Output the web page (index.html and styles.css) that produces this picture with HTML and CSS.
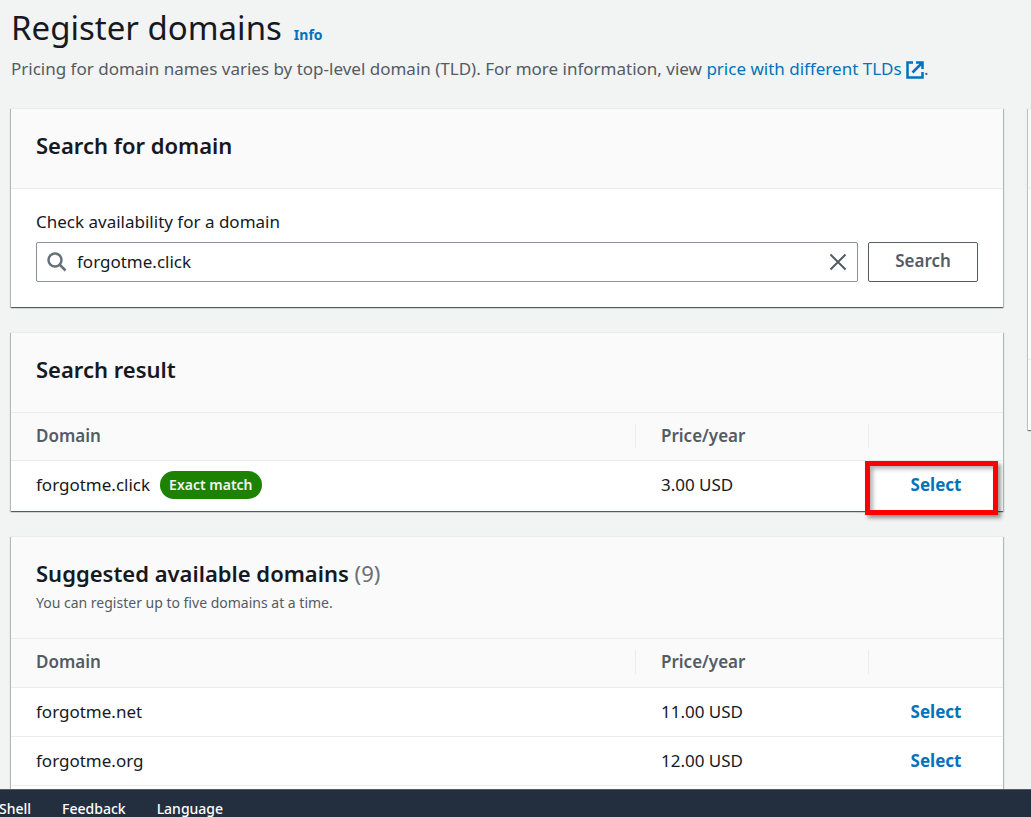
FILE: index.html
```html
<!DOCTYPE html>
<html lang="en">
<head>
<meta charset="utf-8">
<title>Register domains</title>
<link rel="stylesheet" href="styles.css">
</head>
<body>
<div class="page">
  <header class="page-header">
    <div class="title-row">
      <h1 class="title">Register domains</h1>
      <a class="info" href="#info">Info</a>
    </div>
    <p class="intro">Pricing for domain names varies by top-level domain (TLD). For more information, view <a class="link" href="#pricing">price with different TLDs <svg class="external" viewBox="0 0 18 18" aria-hidden="true"><path d="M7 1.500H1.500V16.500H16.500V11M10 1.500H16.500V8M16 2L6.500 11.500"/></svg></a>.</p>
  </header>
  <div class="layout">
    <main class="column">
      <section class="panel">
        <div class="panel-head"><h2 class="heading">Search for domain</h2></div>
        <form class="search-form">
          <label class="label" for="domain">Check availability for a domain</label>
          <div class="search-row">
            <div class="field">
              <svg class="glass" viewBox="0 0 20 20" aria-hidden="true"><circle cx="8" cy="8" r="6.500"/><path d="M12.500 12.500L18.500 18.500"/></svg>
              <input class="input" id="domain" type="text" value="forgotme.click">
              <button class="clear" type="button" aria-label="Clear"><svg class="cross" viewBox="0 0 18 18" aria-hidden="true"><path d="M1.500 1.500L16.500 16.500M16.500 1.500L1.500 16.500"/></svg></button>
            </div>
            <button class="search-button" type="button">Search</button>
          </div>
        </form>
      </section>

      <section class="panel">
        <div class="panel-head"><h2 class="heading">Search result</h2></div>
        <table class="table">
          <thead><tr><th class="domain-col"><div class="th">Domain</div></th><th class="price-col"><div class="th">Price/year</div></th><th class="action-col"></th></tr></thead>
          <tbody><tr><td><div class="domain">forgotme.click <span class="badge">Exact match</span></div></td><td>3.00 USD</td><td class="action"><button class="select" type="button">Select</button><span class="highlight"></span></td></tr></tbody>
        </table>
      </section>

      <section class="panel suggested">
        <div class="panel-head">
          <h2 class="heading">Suggested available domains <span class="count">(9)</span></h2>
          <p class="hint">You can register up to five domains at a time.</p>
        </div>
        <table class="table">
          <thead><tr><th class="domain-col"><div class="th">Domain</div></th><th class="price-col"><div class="th">Price/year</div></th><th class="action-col"></th></tr></thead>
          <tbody>
            <tr><td>forgotme.net</td><td>11.00 USD</td><td class="action"><button class="select" type="button">Select</button></td></tr>
            <tr><td>forgotme.org</td><td>12.00 USD</td><td class="action"><button class="select" type="button">Select</button></td></tr>
            <tr class="spacer"><td></td><td></td><td></td></tr>
          </tbody>
        </table>
      </section>
    </main>
    <aside class="panel side"><div class="side-head"></div><div class="side-body"></div><div class="side-foot"></div></aside>
  </div>
</div>
<footer class="footer">
  <a class="footer-link" href="#shell">Shell</a>
  <a class="footer-link" href="#feedback">Feedback</a>
  <a class="footer-link" href="#language">Language</a>
</footer>
</body>
</html>
```
FILE: styles.css
```css
* { box-sizing: border-box; }
body {
  margin: 0;
  height: 100vh;
  display: flex;
  flex-direction: column;
  overflow: hidden;
  background: #f2f3f3;
  color: #16191f;
  font: 17px/24px "Noto Sans", sans-serif;
}
h1, h2, p { margin: 0; }
a { text-decoration: none; color: #0073bb; }
button, input { font: inherit; color: inherit; }
svg { fill: none; stroke: currentColor; stroke-width: 2; }

.page { flex: 1; min-height: 0; overflow: hidden; }
.page-header { padding: 4px 11px 0; height: 108px; }
.title-row { display: flex; align-items: baseline; gap: 12px; }
.title { font-size: 33px; line-height: 48px; font-weight: 400; }
.info { font-size: 14px; font-weight: 700; }
.intro { margin-top: 5px; color: #545b64; white-space: nowrap; }
.external { width: 18px; height: 18px; vertical-align: -4px; stroke-width: 2.5; }

.layout { display: flex; align-items: flex-start; gap: 25px; padding-left: 11px; }
.column { flex: 1; min-width: 0; display: grid; gap: 25px; }
.panel {
  background: #fff;
  border-top: 1px solid #eaeded;
  box-shadow: 0 1px 1px 0 rgba(0, 28, 36, .5), 1px 1px 1px 0 rgba(0, 28, 36, .2), -1px 1px 1px 0 rgba(0, 28, 36, .2);
}
.panel-head {
  padding: 22px 25px 29px;
  background: #fafafa;
  border-bottom: 1px solid #eaeded;
}
.suggested .panel-head { padding-bottom: 26px; }
.heading { font-size: 22px; line-height: 28px; font-weight: 600; }
.count { color: #687078; font-weight: 400; }
.hint { padding-top: 7px; color: #545b64; font-size: 14px; line-height: 18px; }

.search-form { padding: 21px 25px 25px; }
.label { display: block; margin-bottom: 8px; }
.search-row { display: flex; gap: 10px; }
.field {
  flex: 1;
  display: flex;
  align-items: center;
  height: 40px;
  padding: 0 10px;
  border: 1px solid #879596;
  border-radius: 2px;
}
.glass { width: 20px; height: 20px; color: #687078; stroke-width: 2.5; }
.input { flex: 1; min-width: 0; padding: 0 10px; border: 0; outline: 0; background: none; }
.clear { display: flex; padding: 0; border: 0; background: none; color: #545b64; }
.cross { width: 18px; height: 18px; }
.search-button {
  width: 110px;
  height: 40px;
  padding: 0 0 2px;
  background: #fff;
  border: 1px solid #545b64;
  border-radius: 2px;
  color: #545b64;
  font-weight: 600;
}

.table { width: 100%; table-layout: fixed; border-collapse: separate; border-spacing: 0; }
.domain-col { width: 63%; }
.action-col { width: 134px; }
.table th { height: 48px; padding: 0 0 1px; background: #fafafa; border-bottom: 1px solid #eaeded; }
.suggested .table th { height: 49px; padding-bottom: 2px; }
.th {
  padding: 0 25px;
  border-right: 1px solid #eaeded;
  color: #545b64;
  font-weight: 600;
  text-align: left;
}
.table td { height: 49px; padding: 0 25px; border-bottom: 1px solid #eaeded; }
.table tr:last-child td { height: 50px; padding-bottom: 2px; border-bottom: 0; }
.domain { display: flex; align-items: center; gap: 10px; }
.badge {
  padding: 0 9px;
  border-radius: 14px;
  background: #1d8102;
  color: #f2f3f3;
  font-size: 14px;
  line-height: 28px;
  font-weight: 600;
}
.table .action { position: relative; padding: 0; }
.select { display: block; width: 100%; padding: 0; border: 0; background: none; color: #0073bb; font-weight: 700; }
.highlight {
  position: absolute;
  inset: 0 5px -4px -4px;
  border: 5px solid #f00;
  box-shadow: 3px 3px 4px rgba(0, 0, 0, .4), inset 3px 3px 4px rgba(0, 0, 0, .3);
  pointer-events: none;
}

.side { flex: 0 0 3px; }
.side-head { height: 80px; background: #fafafa; border-bottom: 1px solid #eaeded; }
.side-body { height: 171px; border-bottom: 1px solid #eaeded; }
.side-foot { height: 70px; }

.footer {
  display: flex;
  gap: 31px;
  height: 28px;
  margin-left: -1px;
  padding-top: 8px;
  background: #232f3e;
  border-top: 1px solid #545b64;
  font-size: 14px;
  line-height: 22px;
}
.footer-link { color: #fff; font-weight: 500; }
```
